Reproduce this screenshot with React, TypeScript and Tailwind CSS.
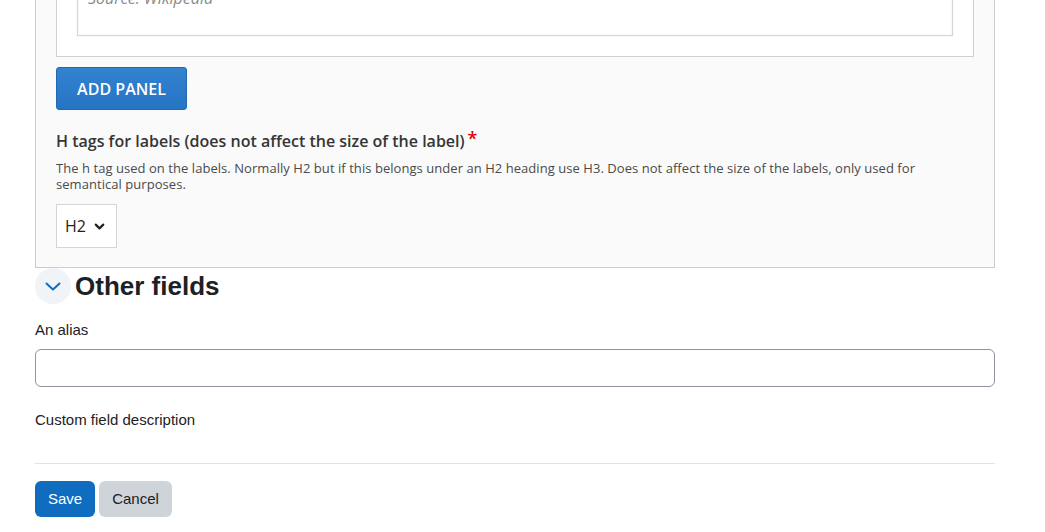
import { ChevronDown } from "lucide-react";

const openSans = { fontFamily: '"Open Sans", sans-serif' };

function PanelEditor() {
  return (
    <div
      className="-mt-[60px] border border-[#cccccc] bg-[#fafafa] px-[20px] pt-[19px] pb-[19px] font-['Open_Sans',sans-serif]"
    >
      <div className="border border-[#d0d0d0] bg-white px-[20px] pt-[13px] pb-[20px]">
        <div className="flex h-[62px] flex-col justify-end border border-[#d6d6d6] bg-white px-[10px] pb-[27px] shadow-[inset_0_1px_3px_rgba(0,0,0,0.08),0_0_2px_rgba(0,0,0,0.08)]">
          <span className="text-[16px] leading-[20px] italic text-[#8a8a8a]">Source: Wikipedia</span>
        </div>
      </div>

      <button
        type="button"
        className="mt-[10px] flex h-[43px] w-[131px] items-center justify-center rounded-[3px] border border-[#1f69b4] bg-gradient-to-b from-[#3282d0] to-[#2575c4] text-[16px] font-semibold text-white"
      >
        ADD PANEL
      </button>

      <div className="mt-[20px] flex items-start text-[16px] leading-[22px] font-semibold text-[#353535]">
        H tags for labels (does not affect the size of the label)
        <span className="ml-[3px] -mt-[3px] text-[18px] text-[#e00000]">*</span>
      </div>
      <p className="mt-[8px] w-[880px] text-[13px] leading-[16px] tracking-[0.05px] text-[#4a4a4a]">
        The h tag used on the labels. Normally H2 but if this belongs under an H2 heading use H3. Does not affect the size of the labels, only used for semantical purposes.
      </p>
      <div className="mt-[12px] flex h-[44px] w-[61px] items-center border border-[#d5d5d5] bg-white pl-[8px] text-[16px] text-[#222]">
        <span>H2</span>
        <ChevronDown size={15} strokeWidth={3.5} className="ml-[6px] text-[#222]" />
      </div>
    </div>
  );
}

export default function App() {
  return (
    <div className="min-h-[532px] w-[1045px] overflow-hidden bg-white font-['Liberation_Sans',Arial,sans-serif] text-[#1d2125]">
      <div className="ml-[35px] w-[960px]">
        <div style={openSans}>
          <PanelEditor />
        </div>

        <div className="flex h-[36px] items-center">
          <span className="flex h-[36px] w-[36px] items-center justify-center rounded-full bg-[#f0f4f9] text-[#0f6cbf]">
            <svg width="16" height="9" viewBox="0 0 16 9" fill="none">
              <polyline points="1.5,1.5 8,7.5 14.5,1.5" stroke="currentColor" strokeWidth="2" strokeLinecap="round" strokeLinejoin="round" />
            </svg>
          </span>
          <h3 className="ml-[4px] text-[26px] leading-[36px] font-bold text-[#1d2125]">Other fields</h3>
        </div>

        <label className="mt-[15px] block text-[15px] leading-[22px]">An alias</label>
        <input
          type="text"
          className="mt-[8px] block h-[38px] w-[960px] rounded-[6px] border border-[#8f959e] bg-white px-3 outline-none"
        />

        <div className="mt-[22px] text-[15px] leading-[22px]">Custom field description</div>

        <hr className="mt-[32px] border-0 border-t border-[#dee2e6]" />

        <div className="mt-[17px] flex gap-[4px] text-[15px]">
          <button type="button" className="h-[36px] w-[60px] rounded-[6px] bg-[#0f6cbf] text-white">
            Save
          </button>
          <button type="button" className="h-[36px] w-[73px] rounded-[6px] bg-[#ced4da] text-[#1d2125]">
            Cancel
          </button>
        </div>
      </div>
    </div>
  );
}
